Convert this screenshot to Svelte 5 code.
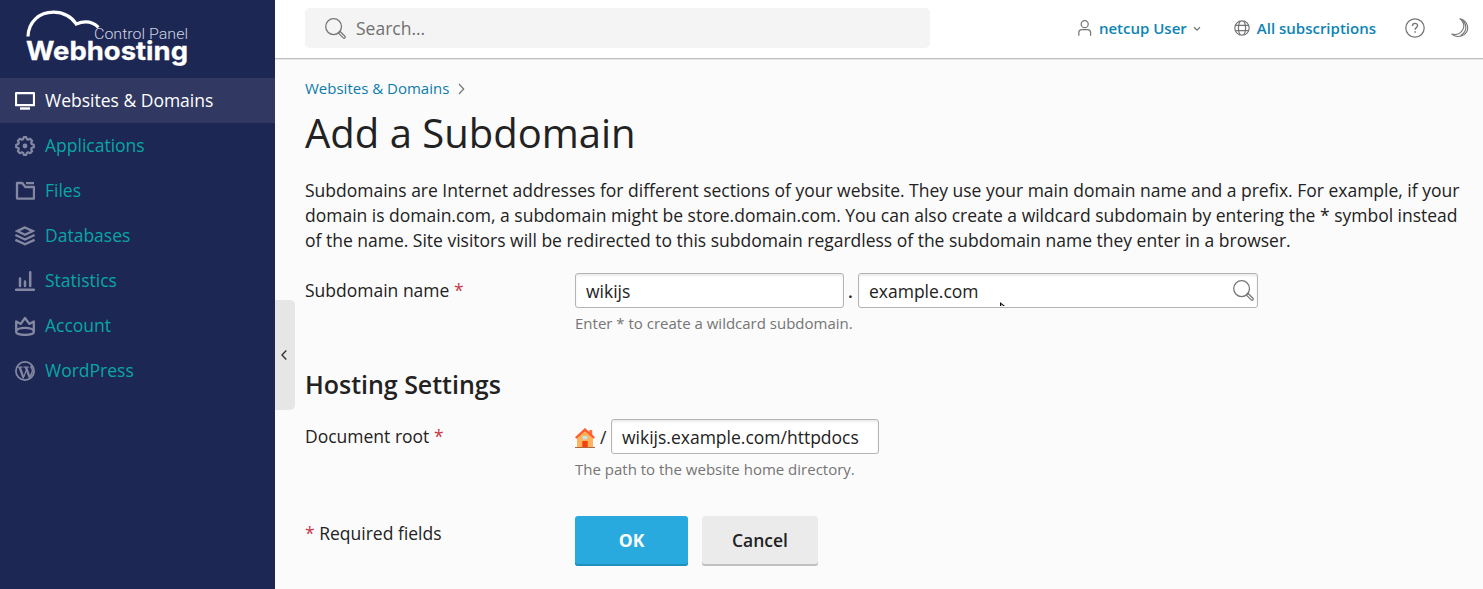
<script>
  const items = [
    { label: 'Websites & Domains', icon: 'monitor', active: true },
    { label: 'Applications', icon: 'gear' },
    { label: 'Files', icon: 'folder' },
    { label: 'Databases', icon: 'layers' },
    { label: 'Statistics', icon: 'chart' },
    { label: 'Account', icon: 'crown' },
    { label: 'WordPress', icon: 'wp' }
  ];
  const lines = [
    'Subdomains are Internet addresses for different sections of your website. They use your main domain name and a prefix. For example, if your',
    'domain is domain.com, a subdomain might be store.domain.com. You can also create a wildcard subdomain by entering the * symbol instead',
    'of the name. Site visitors will be redirected to this subdomain regardless of the subdomain name they enter in a browser.'
  ];
</script>

{#snippet magnifier()}
  <svg class="mag" width="21" height="21" viewBox="0 0 21 21" fill="none" stroke="#757575" stroke-width="1.25">
    <circle cx="8.6" cy="8.6" r="7.9" />
    <path d="M13.2 14.9l1.7-1.7 5 5a1.2 1.2 0 0 1-1.7 1.7z" stroke-linejoin="round" />
  </svg>
{/snippet}

<div class="page">
  <aside>
    <svg class="logo" width="275" height="78" viewBox="0 0 275 78">
      <path d="M28 36.500C28.500 22 39 12.200 53.500 12.200C63.500 12.200 72 17 76.200 24C84.500 20.400 92.500 21.500 98.500 27.300" fill="none" stroke="#fff" stroke-width="3.200" />
      <text x="94" y="38.800" class="logo-small" textLength="94" lengthAdjust="spacingAndGlyphs">Control Panel</text>
      <text x="26" y="59.500" class="logo-big" textLength="162" lengthAdjust="spacingAndGlyphs">Webhosting</text>
    </svg>
    <nav>
      {#each items as item}
        <a class:active={item.active}>
          <svg width="20" height="20" viewBox="0 0 20 20" fill="none" stroke="currentColor" stroke-width="2">
            {#if item.icon === 'monitor'}
              <path d="M1 2.200h18v12H1z" stroke-width="2.200" stroke-linejoin="round" /><path d="M5 17.500h10" stroke-width="2.400" />
            {:else if item.icon === 'gear'}
              <path d="M8.800 1.200h2.400l.8 2.100 1.100.4 2-.9 2 2-.9 2 .4 1.100 2.200.9v2.400l-2.200.8-.4 1.100.9 2.100-2 2-2-.9-1.100.4-.8 2.100H8.800L8 16.700l-1.100-.4-2 .9-2-2 .9-2.100-.4-1.100-2.200-.8V8.800l2.200-.9.4-1.100-.9-2 2-2 2 .9L8 3.300z" stroke-width="2.200" stroke-linejoin="round" />
              <circle cx="10" cy="10" r="2.400" fill="currentColor" stroke="none" />
            {:else if item.icon === 'folder'}
              <path d="M2 2h5.300l3 4H19v11.600H2z" stroke-width="2.300" stroke-linejoin="round" /><path d="M11 2.100h8" stroke-width="2.300" />
            {:else if item.icon === 'layers'}
              <path d="M10 1.400L2.200 5.100 10 8.800l7.800-3.700z" stroke-width="2.300" /><path d="M.4 9l9.600 4.500L19.600 9M.4 13.800l9.600 4.500 9.600-4.500" stroke-width="2.300" />
            {:else if item.icon === 'chart'}
              <path d="M1 18.700h18" stroke-width="2.400" stroke-linecap="round" /><path d="M5 14.900V7.400M10 14.900v-4.500M15.200 14.900V1.300" stroke-width="2.500" stroke-linecap="round" />
            {:else if item.icon === 'crown'}
              <path d="M1.200 16V5.500l4.500 2.400L10 2l4.300 5.900 4.500-2.400V16c0 1.600-3.900 2.900-8.800 2.900S1.200 17.600 1.200 16z" stroke-width="2.300" stroke-linejoin="round" />
              <path d="M1.300 14.900c1.900-4 15.500-4 17.400 0" stroke-width="2.200" />
            {:else}
              <circle cx="10" cy="10" r="9.100" stroke-width="1.700" />
              <path d="M2.500 6.200h5M8.500 6.200h5.200" stroke-width="1.200" />
              <path d="M3.400 6.300h2.500l3 8.400L7.600 17.500zM9.700 6.300h2.500l2.900 8.300-1.200 2.900zM7.600 17.500l3.200-8.800.7 1.800-2.700 7zM13.900 17.500l2.500-6.700c1.300-3-1.600-3.500-1.200-5.300.2-.8.800-1.100 1.400-1.100 1.900 3 2 7.400-.1 10.600z" fill="currentColor" stroke="none" />
            {/if}
          </svg>
          <span>{item.label}</span>
        </a>
      {/each}
    </nav>
  </aside>

  <div class="collapse">
    <svg width="6" height="10" viewBox="0 0 6 10" fill="none" stroke="#333" stroke-width="1.400"><path d="M5.300.6L1 5l4.300 4.400" /></svg>
  </div>

  <div class="body">
    <header>
      <div class="search">{@render magnifier()}<span>Search...</span></div>
      <div class="tools">
        <svg class="user" width="14" height="16" viewBox="0 0 14 16" fill="none" stroke="#757575" stroke-width="1.250"><circle cx="6.700" cy="4.200" r="3.500" /><path d="M.8 15.700V13c0-2 1.300-3.500 3.200-3.500h5.400c1.900 0 3.200 1.500 3.200 3.500v2.700" /></svg>
        <b class="name">netcup User</b>
        <svg class="down" width="8" height="6" viewBox="0 0 8 6" fill="none" stroke="#757575" stroke-width="1.300"><path d="M1 1.200l3 2.900 3-2.900" /></svg>
        <svg class="globe" width="16" height="16" viewBox="0 0 16 16" fill="none" stroke="#757575" stroke-width="1.200"><circle cx="8" cy="8" r="7.200" /><path d="M6.200 1C3.800 5 3.800 11 6.200 15M9.800 1c2.400 4 2.400 10 0 14M1.200 5.300h13.600M1.200 10.700h13.600" /></svg>
        <b class="subs">All subscriptions</b>
        <svg class="help" width="20" height="20" viewBox="0 0 20 20" fill="none" stroke="#757575" stroke-width="1.250"><circle cx="10" cy="10" r="9.200" /><path d="M7.500 8c0-3.600 5.100-3.300 5.100-.4 0 2.100-2.500 2-2.500 4.200" stroke-width="1.350" /><path d="M10.100 13.200v1.500" stroke-width="1.500" /></svg>
        <svg class="moon" width="18" height="20" viewBox="0 0 18 20" fill="none" stroke="#757575" stroke-width="1.100" stroke-linejoin="round"><path d="M9 .8c8.500 2.200 10 11.400 4.200 15.800C9.200 19.500 3.800 19 .8 16.100 5.500 17.100 9.600 15.400 11.600 12 14 7.900 12.700 3.400 9 .8z" /><path d="M12.300 3.200c4 4.400 3.300 11.300-2.800 14.200" /></svg>
      </div>
    </header>

    <main>
      <div class="crumbs"><a>Websites &amp; Domains</a><svg width="7" height="12" viewBox="0 0 7 12" fill="none" stroke="#757575" stroke-width="1.200"><path d="M1 1l4.700 5L1 11" /></svg></div>
      <h1>Add a Subdomain</h1>
      <p class="intro">{#each lines as line}<span>{line}</span>{/each}</p>

      <div class="row first">
        <label for="sub">Subdomain name <i>*</i></label>
        <div>
          <div class="controls">
            <div class="input w269" id="sub">wikijs</div>
            <span class="dot">.</span>
            <div class="input w400">example.com{@render magnifier()}
              <svg class="cursor" width="5" height="5" viewBox="0 0 5 5"><path d="M0 0l5 4H3.200L1.300 2.200V4H0z" fill="#111" /></svg>
            </div>
          </div>
          <div class="hint">Enter * to create a wildcard subdomain.</div>
        </div>
      </div>

      <h2>Hosting Settings</h2>

      <div class="row second">
        <label for="root">Document root <i>*</i></label>
        <div>
          <div class="controls">
            <svg class="house" width="20" height="20" viewBox="0 0 20 20">
              <path d="M14.200 2h3v6h-3z" fill="#ff7043" />
              <path d="M2 9l8-7 8 7v10H2z" fill="#ffb35c" />
              <path d="M7.300 13h5.400v6H7.300z" fill="#f4400f" />
              <path d="M7.700 8h4.600v3.300H7.700z" fill="#bde8f3" />
              <path d="M10 0L0 9.300l1.400 1.500L10 3.200l8.600 7.600L20 9.300z" fill="#ff5a2b" />
              <path d="M0 19h20v1H0z" fill="#b0653c" />
            </svg>
            <span class="slash">/</span>
            <div class="input w268" id="root">wikijs.example.com/httpdocs</div>
          </div>
          <div class="hint">The path to the website home directory.</div>
        </div>
      </div>

      <div class="row actions">
        <div class="required"><i>*</i> Required fields</div>
        <div class="buttons"><button class="ok">OK</button><button class="cancel">Cancel</button></div>
      </div>
    </main>
  </div>
</div>

<style>
  :global(body) { margin: 0; }
  .page { position: relative; display: flex; width: 1483px; height: 589px; overflow: hidden; background: #fbfbfb; color: #222; font: 17.5px/25px "Open Sans", "Noto Sans", sans-serif; }
  .page * { box-sizing: border-box; }
  svg { flex: none; display: block; }
  aside { width: 275px; flex: none; background: #1d2754; }
  .logo-small { font: 300 14px Roboto, sans-serif; fill: #d0d3e0; }
  .logo-big { font: 700 25px Inter, sans-serif; fill: #fff; stroke: #fff; stroke-width: 0.3px; }
  nav a { display: flex; align-items: center; height: 45px; padding-left: 15px; gap: 10px; color: #09a6a3; }
  nav svg { color: #8488a2; }
  nav a.active { background: #313962; color: #fff; }
  nav a.active svg { color: #fff; }
  .collapse { position: absolute; left: 275px; top: 300px; width: 20px; height: 110px; display: flex; align-items: center; padding-left: 6px; background: #e6e6e6; border-radius: 0 5px 5px 0; }
  .body { flex: 1; min-width: 0; }
  header { display: flex; height: 60px; padding: 8px 14px 0 30px; justify-content: space-between; background: #fff; border-bottom: 1px solid #e6e6e6; box-shadow: inset 0 -1px #bfbfbf; }
  .search { display: flex; align-items: center; width: 625px; height: 40px; padding-left: 20px; gap: 10px; background: #f4f4f4; border-radius: 5px; color: #707070; }
  .input .mag { margin-top: -2px; }
  .tools { display: flex; align-items: center; height: 40px; font-size: 15px; color: #0c84b5; white-space: nowrap; }
  b { font-weight: 600; }
  .user { margin: 0 7px 0 0; }
  .down { margin: 1px 33px 0 6px; }
  .globe { margin-right: 7px; }
  .help { margin: 0 26px 0 29px; }
  main { padding: 16px 0 0 30px; }
  .crumbs { display: flex; align-items: center; gap: 9px; height: 25px; font-size: 15px; color: #0c7cae; }
  h1 { margin: 4px 0 0; font-size: 40px; line-height: 56px; font-weight: 400; }
  .intro { margin: 17px 0 0; white-space: nowrap; letter-spacing: -0.007px; }
  .intro span { display: block; }
  .row { display: flex; }
  label, .required { width: 270px; flex: none; }
  i { font-style: normal; color: #c6394b; }
  .first { margin-top: 20px; }
  label { padding-top: 5px; }
  .controls { display: flex; align-items: center; }
  .input { display: flex; align-items: center; position: relative; height: 35px; padding: 2px 3.5px 0 10px; border: 1px solid #b4b4b4; border-radius: 3px; background: #fff; box-shadow: inset 0 2px 2px #ececec; }
  .w269 { width: 269px; }
  .w400 { width: 400px; justify-content: space-between; }
  .w268 { width: 268px; }
  .cursor { position: absolute; left: 141px; top: 28px; }
  .dot { width: 14px; padding: 2px 0 0 4px; font-weight: 600; }
  .hint { margin-top: 4px; line-height: 22px; font-size: 15px; color: #757575; }
  h2 { margin: 34px 0 0; font-size: 25px; line-height: 32px; font-weight: 600; letter-spacing: -0.02px; }
  .second { margin-top: 19px; }
  .house { margin-top: 3px; }
  .slash { width: 16px; padding: 1px 0 0 5px; }
  .actions { margin-top: 36px; }
  .required { padding-top: 5px; }
  .buttons { display: flex; gap: 14px; }
  button { height: 50px; padding: 0 0 1px; border: 0; border-radius: 3px; font: inherit; font-weight: 600; }
  .ok { width: 113px; color: #fff; background: #28aade; box-shadow: inset 0 -2px #218fbb; font-weight: 700; }
  .cancel { width: 116px; color: #222; background: #ebebeb; box-shadow: inset 0 -2px #c0c0c0; font-weight: 600; }
</style>
